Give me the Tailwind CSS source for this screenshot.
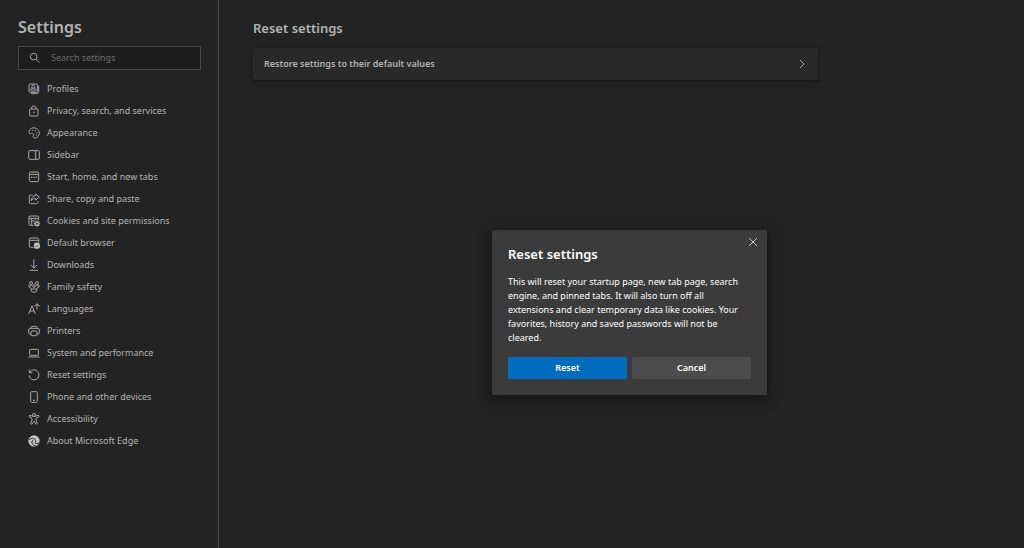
<!DOCTYPE html>
<html lang="en">
<head>
    <meta charset="UTF-8">
    <meta name="viewport" content="width=device-width, initial-scale=1.0">
    <title>Settings</title>
    <script src="https://cdn.jsdelivr.net/npm/@tailwindcss/browser@4"></script>
</head>
<body class="relative flex min-h-screen bg-[#232323] font-['Noto_Sans','Open_Sans',sans-serif] text-[9px] text-[#b4b4b4]">
    <aside class="flex w-[219px] shrink-0 flex-col border-r border-[#4a4a4a] pl-[18px] pr-[17px] pt-4">
        <h1 class="text-base font-semibold leading-[22px]">Settings</h1>
        <label class="mt-2 flex h-6 items-center gap-2.5 border border-[#484848] bg-[#1d1d1d] pl-2.5">
            <svg class="size-3 shrink-0" viewBox="0 0 36 36" fill="none" stroke="#a8a8a8" stroke-width="3"><circle cx="14" cy="14" r="10"/><path d="M21 22l10 10"/></svg>
            <input type="search" aria-label="Search settings" placeholder="Search settings" class="w-full bg-transparent placeholder-[#6c6c6c] outline-none">
        </label>
        <nav class="mt-2 pl-2.5">
            <a href="#" class="flex h-[22px] items-center gap-[7px]">
                <svg class="size-3" viewBox="0 0 36 36" fill="none" stroke="#a8a8a8" stroke-width="3"><rect x="3" y="3" width="25" height="25" rx="4"/><circle cx="15.500" cy="11" r="4.500"/><path d="M8 18h15v2q0 5-7.500 5T8 20zM32 8v17q0 7-7 7H9"/></svg>
                Profiles
            </a>
            <a href="#" class="flex h-[22px] items-center gap-[7px]">
                <svg class="size-3" viewBox="0 0 36 36" fill="none" stroke="#a8a8a8" stroke-width="3"><rect x="5" y="12" width="25" height="21" rx="3"/><path d="M11 12V9a6.500 6.500 0 0 1 13 0v3"/><circle cx="17.500" cy="22" r="2.500" fill="#a8a8a8" stroke="none"/></svg>
                Privacy, search, and services
            </a>
            <a href="#" class="flex h-[22px] items-center gap-[7px]">
                <svg class="size-3" viewBox="0 0 36 36" fill="none" stroke="#a8a8a8" stroke-width="3"><path d="M3 15C4 5 13 1 21 3c10 2 15 12 12 20-3 9-13 13-17 8-3-4 3-7 0-11-3-3-5-1-8 0-4 1-5-2-5-5z"/><g fill="#a8a8a8" stroke="none"><circle cx="14" cy="10" r="2"/><circle cx="22" cy="11" r="2"/><circle cx="27" cy="17" r="2"/><circle cx="25" cy="24" r="2"/></g></svg>
                Appearance
            </a>
            <a href="#" class="flex h-[22px] items-center gap-[7px]">
                <svg class="size-3" viewBox="0 0 36 36" fill="none" stroke="#a8a8a8" stroke-width="3"><rect x="2" y="5" width="32" height="26" rx="3"/><path d="M23 5v26"/></svg>
                Sidebar
            </a>
            <a href="#" class="flex h-[22px] items-center gap-[7px]">
                <svg class="size-3" viewBox="0 0 36 36" fill="none" stroke="#a8a8a8" stroke-width="3"><rect x="4" y="3" width="28" height="29" rx="4"/><path d="M4 10h28"/><path d="M9 19h4M16 19h4M23 19h4" stroke-width="4"/></svg>
                Start, home, and new tabs
            </a>
            <a href="#" class="flex h-[22px] items-center gap-[7px]">
                <svg class="size-3" viewBox="0 0 36 36" fill="none" stroke="#a8a8a8" stroke-width="3"><path d="M14 6H8q-4 0-4 4v18q0 4 4 4h18q4 0 4-4v-4"/><path d="M23 3l11 9-11 9v-5q-8 0-13 7 1-14 13-15z" stroke-linejoin="round"/></svg>
                Share, copy and paste
            </a>
            <a href="#" class="flex h-[22px] items-center gap-[7px]">
                <svg class="size-3" viewBox="0 0 36 36" fill="none" stroke="#a8a8a8" stroke-width="3"><path d="M17 31H6q-3 0-3-3V6q0-3 3-3h23q3 0 3 3v9M3 10h29M11 10v21M11 18h9M22 10v6"/><circle cx="27" cy="26" r="5" stroke-width="5"/><path d="M27 16v4M27 32v4M17 26h4M33 26h3M20 19l3 3M31 30l3 3M34 19l-3 3M23 30l-3 3"/></svg>
                Cookies and site permissions
            </a>
            <a href="#" class="flex h-[22px] items-center gap-[7px]">
                <svg class="size-3" viewBox="0 0 36 36" fill="none" stroke="#a8a8a8" stroke-width="3"><path d="M16 31H8q-4 0-4-4V7q0-4 4-4h20q4 0 4 4v9M4 10h28"/><circle cx="27" cy="26" r="9.500" fill="#c4c4c4" stroke="none"/><path d="M22 26l4 4 6-7" stroke="#232323" stroke-width="2"/></svg>
                Default browser
            </a>
            <a href="#" class="flex h-[22px] items-center gap-[7px]">
                <svg class="size-3" viewBox="0 0 36 36" fill="none" stroke="#a8a8a8" stroke-width="3"><path d="M17.500 1v26M8 18l9.500 9.500L27 18M5 34h25"/></svg>
                Downloads
            </a>
            <a href="#" class="flex h-[22px] items-center gap-[7px]">
                <svg class="size-3" viewBox="0 0 36 36" fill="none" stroke="#a8a8a8" stroke-width="3"><circle cx="9" cy="6" r="4.500"/><circle cx="27" cy="6" r="4.500"/><circle cx="18" cy="15" r="4"/><path d="M10 22q-8-1-8-8h9M26 22q8-1 8-8h-9M9 24h18v2q0 8-9 8t-9-8z"/></svg>
                Family safety
            </a>
            <a href="#" class="flex h-[22px] items-center gap-[7px]">
                <svg class="size-3" viewBox="0 0 36 36" fill="none" stroke="#a8a8a8" stroke-width="3"><path d="M2 33L12 8l10 25M6 24h12M19 9q6-1 8-7 2 6 8 7M27 3v16"/></svg>
                Languages
            </a>
            <a href="#" class="flex h-[22px] items-center gap-[7px]">
                <svg class="size-3" viewBox="0 0 36 36" fill="none" stroke="#a8a8a8" stroke-width="3"><path d="M9 27H6q-4 0-4-4v-8q0-5 5-5h22q5 0 5 5v8q0 4-4 4h-3M9 10V7q0-3 3-3h12q3 0 3 3v3"/><rect x="9" y="18" width="18" height="14" rx="3"/></svg>
                Printers
            </a>
            <a href="#" class="flex h-[22px] items-center gap-[7px]">
                <svg class="size-3" viewBox="0 0 36 36" fill="none" stroke="#a8a8a8" stroke-width="3"><rect x="5" y="7" width="26" height="18" rx="2"/><path d="M1 30h34"/></svg>
                System and performance
            </a>
            <a href="#" class="flex h-[22px] items-center gap-[7px]">
                <svg class="size-3" viewBox="0 0 36 36" fill="none" stroke="#a8a8a8" stroke-width="3"><path d="M4 2v9h9M5 10a15 15 0 1 1-2 9"/></svg>
                Reset settings
            </a>
            <a href="#" class="flex h-[22px] items-center gap-[7px]">
                <svg class="size-3" viewBox="0 0 36 36" fill="none" stroke="#a8a8a8" stroke-width="3"><rect x="8" y="2" width="20" height="32" rx="3"/><path d="M15 28h6"/></svg>
                Phone and other devices
            </a>
            <a href="#" class="flex h-[22px] items-center gap-[7px]">
                <svg class="size-3" viewBox="0 0 36 36" fill="none" stroke="#a8a8a8" stroke-width="3"><circle cx="18" cy="6" r="4.500"/><path d="M14 10L6 7q-4 0-3 4l9 5v5L8 31q1 4 4 2l6-9 6 9q3 2 4-2l-4-10v-5l9-5q1-4-3-4l-8 3z" stroke-linejoin="round"/></svg>
                Accessibility
            </a>
            <a href="#" class="flex h-[22px] items-center gap-[7px]">
                <svg class="size-3" viewBox="0 0 36 36"><circle cx="18" cy="18" r="17" fill="#c4c4c4"/><path d="M3 15c6-7 17-6 20 1 1 4-2 6-2 8 1 3 8 3 13-1M14 16c-5 6-1 16 10 17" fill="none" stroke="#232323" stroke-width="3"/></svg>
                About Microsoft Edge
            </a>
        </nav>
    </aside>

    <main class="min-w-0 flex-1 px-[34px] pt-[18px]">
        <h2 class="text-[13px] font-semibold leading-5">Reset settings</h2>
        <button class="mt-2.5 flex h-8 w-full max-w-[565px] items-center justify-between rounded-xs bg-[#292929] px-[11px] font-semibold shadow-[0_1px_3px_#151515]">
            Restore settings to their default values
            <svg class="size-[10px]" viewBox="0 0 10 10" fill="none" stroke="#a8a8a8"><path d="M3 1l4 4-4 4"/></svg>
        </button>
    </main>

    <!-- Reset confirmation -->
    <div role="dialog" aria-labelledby="dialogTitle" class="absolute left-[492px] top-[230px] w-[275px] rounded-xs bg-[#3b3b3b] px-4 pb-4 pt-3.5 text-white shadow-[0_3px_12px_#111111]">
        <button aria-label="Close" class="absolute right-2 top-1.5 p-px">
            <svg class="size-[10px]" viewBox="0 0 10 10" fill="none" stroke="#c8c8c8"><path d="M1 1l8 8M9 1l-8 8"/></svg>
        </button>
        <h2 id="dialogTitle" class="text-[13px] font-semibold leading-5">Reset settings</h2>
        <p class="mt-[11px] pr-2 leading-[14px]">This will reset your startup page, new tab page, search engine, and pinned tabs. It will also turn off all extensions and clear temporary data like cookies. Your favorites, history and saved passwords will not be cleared.</p>
        <div class="mt-3 grid grid-cols-2 gap-[5px] font-semibold">
            <button class="h-[22px] rounded-[1px] bg-[#006cbe]">Reset</button>
            <button class="h-[22px] rounded-[1px] bg-[#4c4c4c]">Cancel</button>
        </div>
    </div>
</body>
</html>
